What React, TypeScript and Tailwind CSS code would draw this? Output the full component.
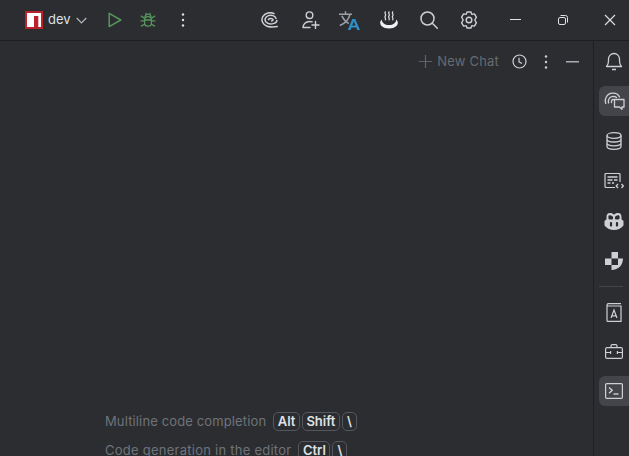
function Dots({ color = "#dfe1e5" }: { color?: string }) {
  return (
    <svg width="4" height="16" viewBox="0 0 4 16">
      <circle cx="2" cy="2.5" r="1.2" fill={color} />
      <circle cx="2" cy="8" r="1.2" fill={color} />
      <circle cx="2" cy="13.5" r="1.2" fill={color} />
    </svg>
  );
}

function NpmLogo() {
  return (
    <svg width="18" height="18" viewBox="0 0 18 18">
      <rect width="18" height="18" fill="#b8232c" />
      <rect x="2" y="2" width="14" height="14" fill="#ffffff" />
      <rect x="9" y="5" width="4.300" height="11" fill="#b8232c" />
    </svg>
  );
}

function RunIcon() {
  return (
    <svg width="14" height="16" viewBox="0 0 14 16" fill="none">
      <path d="M1.200 1.400v13.200L12.800 8z" stroke="#57965c" strokeWidth="1.500" strokeLinejoin="round" />
    </svg>
  );
}

function BugIcon() {
  return (
    <svg width="16" height="16" viewBox="0 0 16 16" fill="none" stroke="#57965c" strokeWidth="1.300">
      <rect x="4.600" y="4.600" width="6.800" height="9.600" rx="3.200" />
      <path d="M5 5.200a3 3 0 0 1 6 0M5.600 1l1.200 2M10.400 1L9.200 3M.8 3.800l3.800 2.600M15.200 3.800l-3.800 2.600M.6 8.800h4M15.400 8.800h-4M1 14.400l3.800-2.400M15 14.400L11.200 12M4.800 8h6.400" />
    </svg>
  );
}

function SwirlIcon() {
  return (
    <svg width="17" height="16" viewBox="0 0 17 16" fill="none" stroke="#ced0d6" strokeWidth="1.500" strokeLinecap="round">
      <path d="M13 1.600C9.500-.2 3.800.8 1.800 4.600-.2 8.400 1.800 12.800 6 14.200c3.400 1.100 7.400.9 10.200.4" />
      <path d="M15 6.400C14.200 3.800 10.400 2.600 7.400 3.600 4.400 4.600 3.200 7.600 4.800 9.800c1.600 2 5.400 2.400 8.200 1.600 2-.6 3-1.900 2.800-3" />
      <path d="M7.400 7.600c.6-1.300 2.900-1.600 4.200-.6.900.8.300 1.800-1 1.900" />
    </svg>
  );
}

function AddUserIcon() {
  return (
    <svg width="18" height="18" viewBox="0 0 18 18" fill="none" stroke="#ced0d6" strokeWidth="1.400" strokeLinecap="round">
      <circle cx="7.500" cy="4.200" r="3.300" />
      <path d="M1 16.500c.1-3.400 2.800-6 6.500-6 .9 0 1.800.1 2.600.4M1 16.500h7M13.500 10.500v7M10 14h7" />
    </svg>
  );
}

function TranslateIcon() {
  return (
    <svg width="21" height="19" viewBox="0 0 21 19" fill="none">
      <path d="M0 3.200h13M6.500 .2v3M11 3.200C9.800 8 6 12.400 .8 14.500M2.800 4.800c1.700 3.500 4.200 6.200 7 7.800" stroke="#9da0a8" strokeWidth="1.500" />
      <path d="M8.800 19L13.300 8h2.900L21 19h-2.800l-.9-2.400h-4.800L11.600 19zm4.400-4.400h3.300l-1.650-4.400z" fill="#2e8fc6" />
    </svg>
  );
}

function SpringIcon() {
  return (
    <svg width="20" height="18" viewBox="0 0 20 18" fill="none">
      <path d="M6.300 .8c-1.200 1.500 1.200 2.500 0 4s1 2.500 0 4M10 .8c-1.200 1.500 1.200 2.500 0 4s1 2.500 0 4M13.700 .8c-1.200 1.500 1.200 2.500 0 4s1 2.500 0 4" stroke="#dfe1e5" strokeWidth="1.200" strokeLinecap="round" />
      <path d="M3 8.500C-.4 10.600.5 17.500 10 17.500s10.400-6.900 7-9c.6 2.500-2.500 5.500-7 5.500S2.400 11 3 8.500z" fill="#f0f1f2" />
    </svg>
  );
}

function SearchIcon() {
  return (
    <svg width="18" height="18" viewBox="0 0 18 18" fill="none" stroke="#ced0d6" strokeWidth="1.500" strokeLinecap="round">
      <circle cx="7.500" cy="7.500" r="6.500" />
      <path d="M12.300 12.300l5 5" />
    </svg>
  );
}

function GearIcon() {
  return (
    <svg width="18" height="18" viewBox="0 0 18 18" fill="none" stroke="#ced0d6" strokeWidth="1.400" strokeLinejoin="round">
      <circle cx="9" cy="9" r="2.800" />
      <path d="M7 1h4l.8 2.400 2.600-.5 2 3.300L14.800 9l1.600 2.800-2 3.300-2.600-.5L11 17H7l-.8-2.400-2.600.5-2-3.300L3.200 9 1.600 6.200l2-3.300 2.600.5z" />
    </svg>
  );
}

function RestoreIcon() {
  return (
    <svg width="12" height="12" viewBox="0 0 12 12" fill="none" stroke="#dfe1e5">
      <rect x="1.500" y="3.500" width="7" height="7" rx="1.500" />
      <path d="M3.500 1.500h5a2 2 0 0 1 2 2v5" />
    </svg>
  );
}

function CloseIcon() {
  return (
    <svg width="12" height="12" viewBox="0 0 12 12" fill="none" stroke="#dfe1e5" strokeWidth="1.100">
      <path d="M1 1l10 10M11 1L1 11" />
    </svg>
  );
}

function ClockIcon() {
  return (
    <svg width="15" height="15" viewBox="0 0 15 15" fill="none" stroke="#ced0d6" strokeWidth="1.200">
      <circle cx="7.500" cy="7.500" r="6.500" />
      <path d="M7 3.800v4l3 1.800" />
    </svg>
  );
}

function BellIcon() {
  return (
    <svg width="18" height="20" viewBox="0 0 18 20" fill="none" stroke="#ced0d6" strokeWidth="1.300">
      <path d="M1.500 15.500c1.500-1.500 2-3 2-5.500V8a5.500 5.500 0 0 1 11 0v2c0 2.500.5 4 2 5.500z" strokeLinejoin="round" />
      <path d="M7 18.500h4" strokeWidth="1.500" />
    </svg>
  );
}

function AiChatIcon() {
  return (
    <svg width="21" height="18" viewBox="0 0 21 18" fill="none" stroke="#ced0d6" strokeWidth="1.300" strokeLinecap="round">
      <path d="M1.800 11.500C.2 7 2.800 1.500 8.500 1.200c3.400-.2 5.800 1.400 7 3.800" />
      <path d="M4.600 11c-1-3.300 1-6.500 4.400-6.700 1.500 0 2.700.4 3.500 1.200" />
      <path d="M7.500 10.500c-.4-1.500.4-3 2-3" />
      <path d="M10.500 7.500h9.500v7.500h-2v2.300L15.500 15h-5z" strokeLinejoin="round" />
    </svg>
  );
}

function DatabaseIcon() {
  return (
    <svg width="16" height="18" viewBox="0 0 16 18" fill="none" stroke="#ced0d6" strokeWidth="1.300">
      <ellipse cx="8" cy="3.500" rx="7" ry="2.800" />
      <path d="M1 3.500v11c0 1.600 3.100 2.800 7 2.800s7-1.200 7-2.800v-11M1 7.200c0 1.600 3.100 2.800 7 2.800s7-1.200 7-2.800M1 11c0 1.600 3.100 2.800 7 2.800s7-1.200 7-2.800" />
    </svg>
  );
}

function NewsIcon() {
  return (
    <svg width="20" height="16" viewBox="0 0 20 16" fill="none" stroke="#ced0d6" strokeWidth="1.200">
      <path d="M11 14.500H2a1 1 0 0 1-1-1v-12a1 1 0 0 1 1-1h13a1 1 0 0 1 1 1V9" />
      <path d="M3.500 4h10M3.500 7h5M10 7h3.500M3.500 10h3M8 10h2" strokeWidth="1.300" />
      <path d="M14 11l-1.800 2 1.800 2M17.500 11l1.800 2-1.800 2" strokeWidth="1.300" />
    </svg>
  );
}

function CopilotIcon() {
  return (
    <svg width="20" height="17" viewBox="0 0 20 17" fill="#ced0d6">
      <path
        fillRule="evenodd"
        d="M6 0C3.500 0 2.500 1.500 2.500 4v2.200L.5 8v4.500C3 15.500 6.500 17 10 17s7-1.500 9.500-4.500V8l-2-1.800V4c0-2.500-1-4-3.500-4-1.700 0-3 .6-4 1.800C9 .6 7.700 0 6 0zM5.500 2.200c-.8 0-1.100.6-1.100 1.600v1.200c0 1 .5 1.400 1.300 1.400h2c1 0 1.400-.6 1.400-1.500C9.100 3 7.700 2.200 5.500 2.200zm9 0c-2.200 0-3.600.8-3.600 2.700 0 .9.400 1.500 1.400 1.500h2c.8 0 1.300-.4 1.300-1.400V3.800c0-1-.3-1.600-1.100-1.600zM7 9c-.7 0-1.100.4-1.100 1.100v2.300c0 .7.400 1.100 1.100 1.100s1.100-.4 1.100-1.100v-2.300C8.100 9.400 7.700 9 7 9zm6 0c-.7 0-1.100.4-1.100 1.100v2.300c0 .7.400 1.100 1.100 1.100s1.100-.4 1.100-1.100v-2.300c0-.7-.4-1.100-1.100-1.100z"
      />
    </svg>
  );
}

function CheckerIcon() {
  return (
    <svg width="18" height="18" viewBox="0 0 18 18" fill="#ced0d6">
      <path d="M6.500 0h6.500v6.500H6.500zM0 6.500h6.500V13H0z" />
      <path d="M13 6.500h5C18 13 13.500 18 6.500 18v-5H13z" />
    </svg>
  );
}

function BookIcon() {
  return (
    <svg width="16" height="19" viewBox="0 0 16 19" fill="none" stroke="#ced0d6" strokeWidth="1.200">
      <path d="M15 .6H2.500C1.500.6 1 1.200 1 2.200v15.200c0 .6.400 1 1 1h13V3H2.500C1.500 3 1 2.500 1 2" />
      <path d="M5 15l3-8 3 8M6 12.800h4" />
    </svg>
  );
}

function ToolboxIcon() {
  return (
    <svg width="18" height="15" viewBox="0 0 18 15" fill="none" stroke="#ced0d6" strokeWidth="1.200">
      <path d="M6 3.500V2c0-.8.500-1.400 1.300-1.400h3.400c.8 0 1.300.6 1.300 1.400v1.500" />
      <rect x=".6" y="3.600" width="16.800" height="10.800" rx="1.500" />
      <path d="M.6 8.500h5M12.400 8.500h5M5.600 7v3M12.400 7v3" />
    </svg>
  );
}

function TerminalIcon() {
  return (
    <svg width="18" height="16" viewBox="0 0 18 16" fill="none" stroke="#ced0d6" strokeWidth="1.200">
      <rect x=".6" y=".6" width="16.800" height="14.800" rx="1.200" />
      <path d="M4 4.500l3.200 2.800L4 10.200" strokeWidth="1.400" />
      <path d="M8.500 11h5" strokeWidth="1.400" />
    </svg>
  );
}

function Kbd({ label }: { label: string }) {
  return (
    <span className="flex h-[19px] min-w-[15px] items-center justify-center rounded-[5px] border border-[#54575d] px-[3.5px] text-[13px] font-semibold leading-none text-[#dfe1e5]">
      {label}
    </span>
  );
}

function Hint({ text, keys, labelClass }: { text: string; keys: string[]; labelClass: string }) {
  return (
    <div className="flex h-[19px] items-center">
      <span className={`text-[13px] text-[#6f737a] ${labelClass}`}>{text}</span>
      <div className="flex gap-[2px]">
        {keys.map((k) => (
          <Kbd key={k} label={k} />
        ))}
      </div>
    </div>
  );
}

function RailButton({ active, children }: { active?: boolean; children: React.ReactNode }) {
  return (
    <div className={`flex h-[30px] w-[30px] items-center justify-center rounded-l-[6px] ${active ? "bg-[#43454a]" : ""}`}>
      {children}
    </div>
  );
}

export default function App() {
  return (
    <div className="flex h-[456px] w-[629px] flex-col overflow-hidden bg-[#2b2d30] font-['Inter',sans-serif]">
      <header className="flex h-[41px] shrink-0 items-center border-b border-[#1e1f22] pl-[25px]">
        <NpmLogo />
        <span className="ml-[5px] text-[13px] text-[#dfe1e5]">dev</span>
        <svg className="ml-[5px]" width="11" height="7" viewBox="0 0 11 7" fill="none" stroke="#b4b8bf" strokeWidth="1.200">
          <path d="M.7 1l4.800 4.800L10.300 1" />
        </svg>
        <div className="ml-[21px] flex items-center"><RunIcon /></div>
        <div className="ml-[18px] flex items-center"><BugIcon /></div>
        <div className="ml-[25px] flex items-center"><Dots /></div>
        <div className="ml-[76px] flex items-center"><SwirlIcon /></div>
        <div className="ml-[24px] flex items-center"><AddUserIcon /></div>
        <div className="ml-[19px] flex items-center"><TranslateIcon /></div>
        <div className="ml-[19px] flex items-center"><SpringIcon /></div>
        <div className="ml-[21px] flex items-center"><SearchIcon /></div>
        <div className="ml-[22px] flex items-center"><GearIcon /></div>
        <svg className="ml-[32px]" width="11" height="2" viewBox="0 0 11 2"><rect width="11" height="1" fill="#dfe1e5" /></svg>
        <div className="ml-[36px] flex items-center"><RestoreIcon /></div>
        <div className="ml-[35px] flex items-center"><CloseIcon /></div>
      </header>

      <div className="flex min-h-0 flex-1">
        <main className="flex w-[593px] flex-col">
          <div className="flex h-[41px] shrink-0 items-center justify-end pr-[14px]">
            <svg width="13" height="13" viewBox="0 0 13 13" stroke="#5f6268" strokeWidth="1.200">
              <path d="M6.500 0v13M0 6.500h13" />
            </svg>
            <span className="ml-[5px] text-[13px] tracking-[0.2px] text-[#666b73]">New Chat</span>
            <div className="ml-[13px] flex items-center"><ClockIcon /></div>
            <div className="ml-[17px] flex items-center"><Dots color="#ced0d6" /></div>
            <svg className="ml-[18px]" width="13" height="2" viewBox="0 0 13 2"><rect width="13" height="1.500" fill="#a8abb2" /></svg>
          </div>
          <div className="mt-[330px] flex flex-col gap-[10px] pl-[105px]">
            <Hint text="Multiline code completion" keys={["Alt", "Shift", "\\"]} labelClass="mr-[7px] tracking-[0.13px]" />
            <Hint text="Code generation in the editor" keys={["Ctrl", "\\"]} labelClass="mr-[7px] tracking-[0.25px]" />
          </div>
        </main>

        <aside className="flex flex-1 flex-col border-l border-[#1e1f22] pl-[5px] pt-[5px]">
          <div className="flex flex-col gap-[10px]">
            <RailButton><BellIcon /></RailButton>
            <RailButton active><AiChatIcon /></RailButton>
            <RailButton><DatabaseIcon /></RailButton>
            <RailButton><NewsIcon /></RailButton>
            <RailButton><CopilotIcon /></RailButton>
            <RailButton><CheckerIcon /></RailButton>
          </div>
          <div className="my-[10px] h-px w-[24px] bg-[#43454a]" />
          <div className="flex flex-col gap-[9px]">
            <RailButton><BookIcon /></RailButton>
            <RailButton><ToolboxIcon /></RailButton>
            <div className="mt-px"><RailButton active><TerminalIcon /></RailButton></div>
          </div>
        </aside>
      </div>
    </div>
  );
}
